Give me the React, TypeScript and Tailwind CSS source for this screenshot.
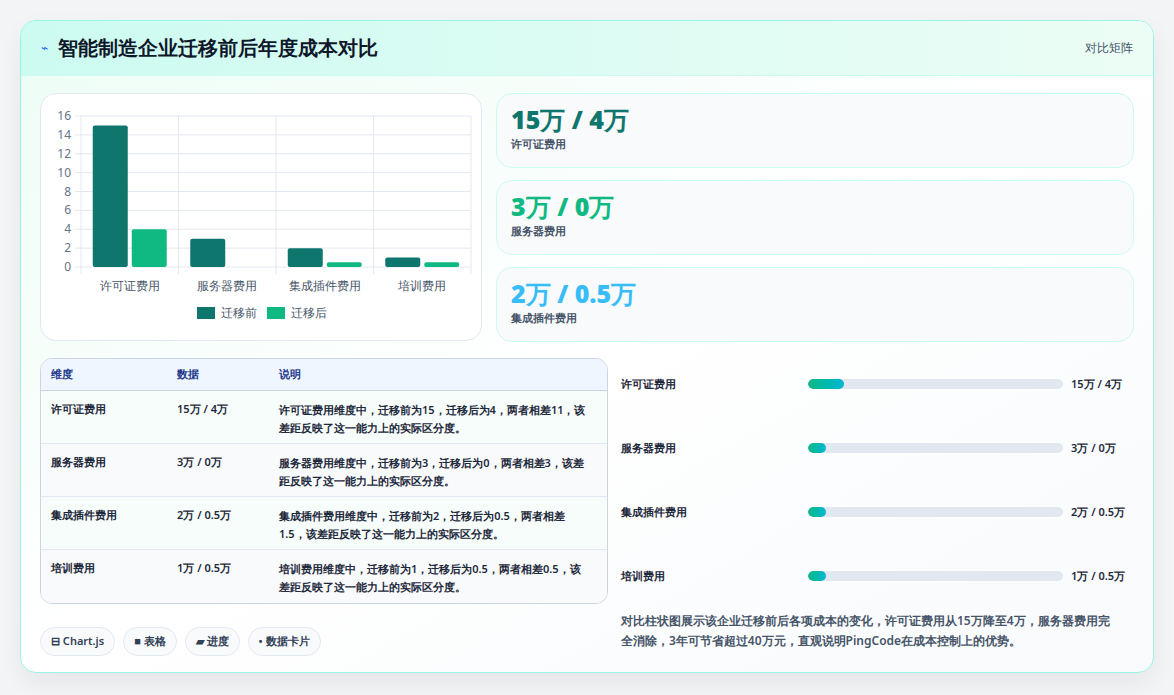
const rows = [
  { name: "许可证费用", data: "15万 / 4万", note: "许可证费用维度中，迁移前为15，迁移后为4，两者相差11，该差距反映了这一能力上的实际区分度。", before: 15, after: 4, pct: 14 },
  { name: "服务器费用", data: "3万 / 0万", note: "服务器费用维度中，迁移前为3，迁移后为0，两者相差3，该差距反映了这一能力上的实际区分度。", before: 3, after: 0, pct: 7 },
  { name: "集成插件费用", data: "2万 / 0.5万", note: "集成插件费用维度中，迁移前为2，迁移后为0.5，两者相差1.5，该差距反映了这一能力上的实际区分度。", before: 2, after: 0.5, pct: 7 },
  { name: "培训费用", data: "1万 / 0.5万", note: "培训费用维度中，迁移前为1，迁移后为0.5，两者相差0.5，该差距反映了这一能力上的实际区分度。", before: 1, after: 0.5, pct: 7 },
];

const stats = [
  { v: "15万 / 4万", l: "许可证费用", c: "text-[#0f766e]" },
  { v: "3万 / 0万", l: "服务器费用", c: "text-[#10b981]" },
  { v: "2万 / 0.5万", l: "集成插件费用", c: "text-[#38bdf8]" },
];

function Chart() {
  const x0 = 40, x1 = 430, yTop = 22, yBot = 173;
  const sy = (v: number) => yBot - (v / 16) * (yBot - yTop);
  const cw = (x1 - x0) / 4;
  return (
    <svg width="442" height="248" className="block">
      {[0, 2, 4, 6, 8, 10, 12, 14, 16].map((t) => (
        <g key={t}>
          <line x1={x0 - 6} x2={x1} y1={sy(t)} y2={sy(t)} stroke="#e2e8f0" />
          <text x={x0 - 10} y={sy(t) + 4} textAnchor="end" fontSize="12" fill="#64748b">{t}</text>
        </g>
      ))}
      {[0, 1, 2, 3, 4].map((i) => (
        <line key={i} x1={x0 + i * cw} x2={x0 + i * cw} y1={yTop} y2={yBot + 7} stroke="#e2e8f0" />
      ))}
      {rows.map((r, i) => {
        const cx = x0 + i * cw + cw / 2;
        return (
          <g key={r.name}>
            <rect x={cx - 37} y={sy(r.before)} width={35} height={yBot - sy(r.before)} rx="2" fill="#0f766e" />
            {r.after > 0 && <rect x={cx + 2} y={sy(r.after)} width={35} height={yBot - sy(r.after)} rx="2" fill="#10b981" />}
            <text x={cx} y={196} textAnchor="middle" fontSize="12" fill="#475569">{r.name}</text>
          </g>
        );
      })}
      <rect x="156" y="213" width="18" height="12" fill="#0f766e" />
      <text x="180" y="223" fontSize="12" fill="#475569">迁移前</text>
      <rect x="226" y="213" width="18" height="12" fill="#10b981" />
      <text x="250" y="223" fontSize="12" fill="#475569">迁移后</text>
    </svg>
  );
}

export default function App() {
  return (
    <div className="min-h-[695px] bg-[#f3f4f6] pt-5 px-5 font-['Noto_Sans_CJK_SC','Noto_Sans',sans-serif]">
      <div className="w-[1134px] h-[653px] rounded-2xl border border-[#99f6e4] bg-gradient-to-br from-[#ecfdf5] via-white to-[#f8fafc] overflow-hidden shadow-[0_10px_25px_rgba(0,0,0,0.06)]">
        <div className="h-[55px] flex items-center justify-between px-5 bg-gradient-to-r from-[#ccfbf1] to-[#ecfdf5] border-b border-[#ccfbf1]">
          <div className="flex items-center gap-2.5">
            <span className="text-[#2563eb] text-xs">⌁</span>
            <h1 className="text-[20px] font-bold text-[#0f172a]">智能制造企业迁移前后年度成本对比</h1>
          </div>
          <span className="text-xs text-[#475569]">对比矩阵</span>
        </div>
        <div className="px-[19px] pt-[17px]">
          <div className="flex gap-[14px]">
            <div className="w-[442px] h-[248px] bg-white rounded-2xl border border-[#e2e8f0]">
              <Chart />
            </div>
            <div className="flex-1 flex flex-col gap-3">
              {stats.map((s) => (
                <div key={s.l} className="h-[75px] rounded-2xl border border-[#ccfbf1] bg-[#f8fafc] px-[14px] pt-2">
                  <div className={`text-[25px] font-black leading-[34px] ${s.c}`}>{s.v}</div>
                  <div className="text-[11px] text-[#475569] font-semibold">{s.l}</div>
                </div>
              ))}
            </div>
          </div>
          <div className="flex gap-[13px] mt-4">
            <div className="w-[568px]">
              <div className="rounded-xl border border-[#cbd5e1] overflow-hidden bg-white text-[11px] text-[#1e293b]">
                <div className="flex h-8 items-center bg-[#eff6ff] font-semibold text-[#1e3a8a] border-b border-[#cbd5e1]">
                  <div className="w-[136px] pl-2.5">维度</div>
                  <div className="w-[102px]">数据</div>
                  <div className="flex-1">说明</div>
                </div>
                {rows.map((r, i) => (
                  <div key={r.name} className={`flex h-[53px] pt-2.5 font-semibold ${i % 2 ? "bg-[#f8fafc]" : "bg-[#f7fdfb]"} ${i < 3 ? "border-b border-[#e2e8f0]" : ""}`}>
                    <div className="w-[136px] pl-2.5">{r.name}</div>
                    <div className="w-[102px]">{r.data}</div>
                    <div className="flex-1 pr-[18px] leading-[18px]">{r.note}</div>
                  </div>
                ))}
              </div>
              <div className="flex gap-2 mt-[23px] text-[11px] font-semibold text-[#334155]">
                {["⊟ Chart.js", "■ 表格", "▰ 进度", "• 数据卡片"].map((p) => (
                  <span key={p} className="h-[29px] px-2.5 flex items-center rounded-full border border-[#e2e8f0] bg-[#f8fafc]">{p}</span>
                ))}
              </div>
            </div>
            <div className="flex-1">
              <div className="flex flex-col -mt-1.5">
                {rows.map((r) => (
                  <div key={r.name} className="h-16 flex items-center text-[11px] font-semibold text-[#1e293b]">
                    <div className="w-[187px]">{r.name}</div>
                    <div className="w-[255px] h-2.5 rounded-full bg-[#e2e8f0] overflow-hidden">
                      <div className="h-full rounded-full bg-gradient-to-r from-[#10b981] to-[#06b6d4]" style={{ width: `${r.pct}%` }} />
                    </div>
                    <div className="pl-2 whitespace-nowrap">{r.data}</div>
                  </div>
                ))}
              </div>
              <p className="mt-[3px] text-[12px] font-semibold leading-[20px] text-[#475569] pr-4">
                对比柱状图展示该企业迁移前后各项成本的变化，许可证费用从15万降至4万，服务器费用完全消除，3年可节省超过40万元，直观说明PingCode在成本控制上的优势。
              </p>
            </div>
          </div>
        </div>
      </div>
    </div>
  );
}
